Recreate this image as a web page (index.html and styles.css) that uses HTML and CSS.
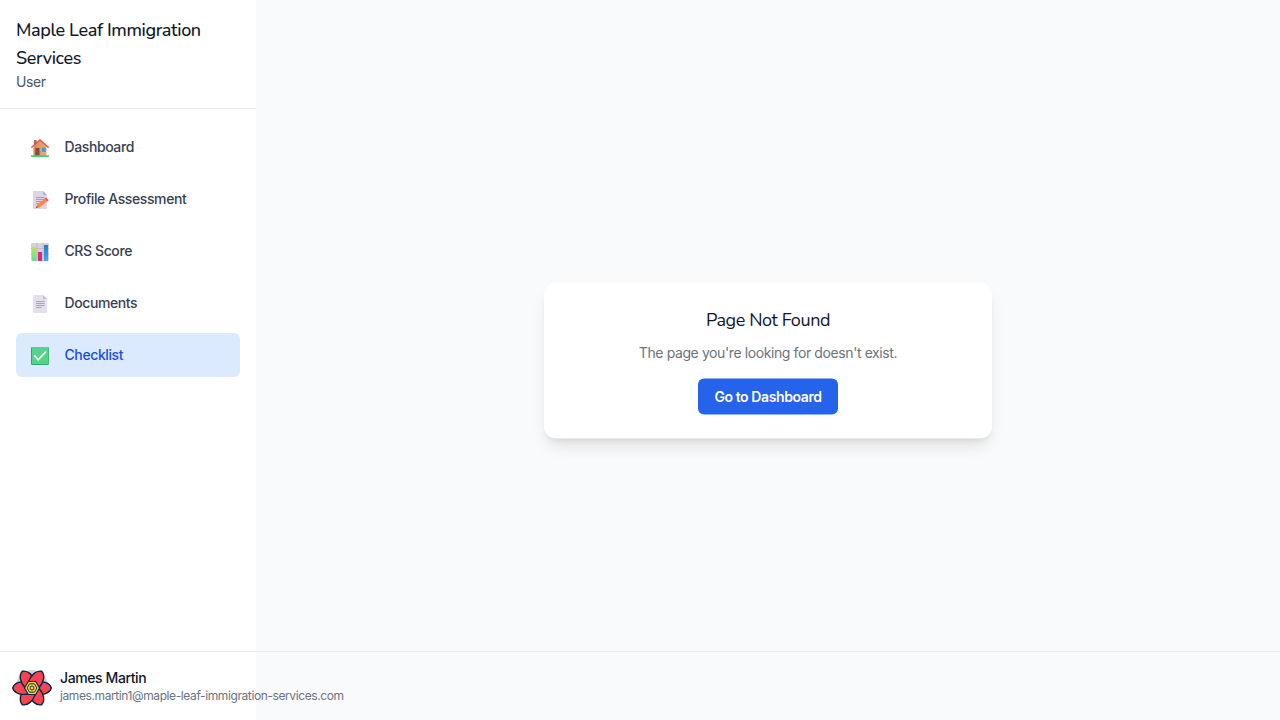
FILE: index.html
```html
<!DOCTYPE html>
<html lang="en">
<head>
<meta charset="utf-8">
<title>Maple Leaf Immigration Services</title>
<link rel="stylesheet" href="styles.css">
</head>
<body>
<div class="app">
  <aside class="sidebar">
    <header class="brand">
      <h1 class="brand-name">Maple Leaf Immigration Services</h1>
      <p class="brand-role">User</p>
    </header>
    <nav class="nav">
      <a class="nav-item"><svg class="nav-icon" viewBox="0 0 18 18">
        <defs><linearGradient id="wall" x2="1"><stop stop-color="#c98d62"/><stop offset="1" stop-color="#f0ad72"/></linearGradient></defs>
        <path d="M3 1h2.600v5H3z" fill="#a9694f"/><path d="M2.500 7.500 9 1.500l6.500 6V17h-13z" fill="url(#wall)"/>
        <path d="M.8 8.300 9 1l8.200 7.300" fill="none" stroke="#ed5140" stroke-width="1.500" stroke-linecap="round"/>
        <path d="M4.300 9h4.200v7.500H4.300z" fill="#7d4c48"/><path d="M11 8.500h3.700V13H11z" fill="#28a9ed"/><path d="M0 16.300h18V18H0z" fill="#45cc76"/>
      </svg><span>Dashboard</span></a>
      <a class="nav-item"><svg class="nav-icon" viewBox="0 0 18 18">
        <path d="M2 0h10l4 4v14H2z" fill="#ddd4e7"/><path d="M12 0v4h4z" fill="#b9afc1"/>
        <path d="M5 6.500h8M5 8.500h8M5 10.500h6M5 12.500h4" stroke="#9b91a5" stroke-width=".8"/>
        <path d="m5 17 1-3.500 7.500-5.500 2.500 2.500-7.300 6z" fill="#ff8740"/><path d="m13 7.800 2-1.300 2.800 2.700-1.800 1.300z" fill="#f6525f"/><path d="m5 17 .6-2 1.500 1.500z" fill="#824c46"/>
      </svg><span>Profile Assessment</span></a>
      <a class="nav-item"><svg class="nav-icon" viewBox="0 0 18 18">
        <defs><linearGradient id="green" x2="0" y2="1"><stop stop-color="#b8e650"/><stop offset="1" stop-color="#68dda0"/></linearGradient><linearGradient id="blue" x2="0" y2="1"><stop stop-color="#2779cf"/><stop offset="1" stop-color="#39aaf3"/></linearGradient></defs>
        <rect width="18" height="18" rx="1" fill="#d8d0df"/><path d="M0 5.500h18M0 11.500h18M6 0v18M12 0v18" stroke="#bcb1c6" stroke-width=".7"/>
        <path d="M1 4h4.500v14H1z" fill="url(#green)"/><path d="M7 9h4v9H7z" fill="#dc267f"/><path d="M13 2h4v16h-4z" fill="url(#blue)"/>
      </svg><span>CRS Score</span></a>
      <a class="nav-item"><svg class="nav-icon" viewBox="0 0 18 18">
        <path d="M2 0h10l4 4v14H2z" fill="#e6dff0"/><path d="M12 0v4h4z" fill="#c7bfcf"/>
        <path d="M5 6.500h8.500M5 8.500h8.500M5 10.500h8.500M5 12.500h5.500" stroke="#a69dae" stroke-width=".9"/>
      </svg><span>Documents</span></a>
      <a class="nav-item nav-item-active"><svg class="nav-icon" viewBox="0 0 18 18">
        <rect width="18" height="18" rx="1.200" fill="#33a566"/><path d="M1 0h16.500v17H1z" fill="#54d489"/><path d="m3.800 9 3.400 3.800L14.500 5.200" fill="none" stroke="#fff" stroke-width="1.700" stroke-linecap="round"/>
      </svg><span>Checklist</span></a>
    </nav>
  </aside>
  <main class="content">
    <section class="card">
      <h2 class="card-title">Page Not Found</h2>
      <p class="card-text">The page you're looking for doesn't exist.</p>
      <a class="button">Go to Dashboard</a>
    </section>
  </main>
  <footer class="account">
    <div class="avatar">
      <svg class="flower" viewBox="-20 -20 40 40">
        <defs><path id="petal" d="M4 -6C10.500 -7.300 17.500 -5.500 19.300 0C17.500 5.500 10.500 7.300 4 6Z"/></defs>
        <g fill="#ff4154" stroke="#00293d" stroke-width="1.400" stroke-linejoin="round">
          <use href="#petal"/><use href="#petal" transform="rotate(60)"/><use href="#petal" transform="rotate(120)"/><use href="#petal" transform="rotate(180)"/><use href="#petal" transform="rotate(240)"/><use href="#petal" transform="rotate(300)"/>
        </g>
        <path d="m-3.700-6.500h7.400L7.500 0 3.700 6.500h-7.400L-7.500 0z" fill="#ffd94c" stroke="#00293d" stroke-width="1.200"/>
        <path d="m-2.400-4.200h4.800L4.900 0 2.400 4.200h-4.800L-4.900 0z" fill="none" stroke="#00293d" stroke-width="1"/>
        <circle r="2" fill="none" stroke="#00293d" stroke-width="1"/>
      </svg>
    </div>
    <div>
      <p class="account-name">James Martin</p>
      <p class="account-email">james.martin1@maple-leaf-immigration-services.com</p>
    </div>
  </footer>
</div>
</body>
</html>
```
FILE: styles.css
```css
* { box-sizing: border-box; }
html { background: #f9fafb; }
body { margin: 0; font-family: Inter, "Liberation Sans", sans-serif; font-size: 14px; line-height: 20px; letter-spacing: -.4px; color: #0f172a; }
h1, h2, p { margin: 0; }
.app { height: 720px; display: grid; grid-template: 651px 69px / 256px 1fr; background: linear-gradient(90deg, #fff 256px, #f9fafb 256px); }
.brand { padding: 16px; height: 109px; border-bottom: 1px solid #e8eaed; }
.brand-name, .card-title { font-family: Nunito, Lato, sans-serif; font-size: 18px; line-height: 28px; font-weight: 500; color: #0f172a; }
.brand-name { letter-spacing: -.37px; }
.brand-role { color: #4b5563; }
.nav { padding: 16px; display: grid; gap: 8px; }
.nav-item { height: 44px; padding: 0 15px; display: flex; align-items: center; gap: 15.5px; border-radius: 6px; font-weight: 500; color: #374151; }
.nav-item-active { background: #dbeafe; color: #1d4ed8; }
.nav-icon { width: 18px; height: 18px; margin-top: 2px; }
.content { display: grid; place-items: center; height: 720px; }
.card { width: 448px; padding: 24px; border-radius: 12px; background: #fff; text-align: center; transform: translateY(.5px); box-shadow: 0 10px 15px -3px rgb(0 0 0 / .1), 0 4px 6px -4px rgb(0 0 0 / .1); }
.card-title { font-weight: 400; line-height: 26px; padding-bottom: 2px; }
.card-text { margin: 8px 0 16px; color: #6b7280; }
.button { display: block; width: fit-content; margin: 0 auto; padding: 8px 16px; border-radius: 6px; background: #2563eb; color: #fff; font-weight: 600; }
.account { grid-column: 1 / 3; border-top: 1px solid #e8eaed; padding: 16px; display: flex; align-items: center; gap: 12px; }
.avatar { width: 32px; height: 32px; border-radius: 50%; background: #d1d5db; }
.flower { display: block; width: 40px; height: 40px; margin: -2px -4px; }
.account-name { font-weight: 500; }
.account-email { font-size: 12px; line-height: 16px; color: #6b7280; }
```
